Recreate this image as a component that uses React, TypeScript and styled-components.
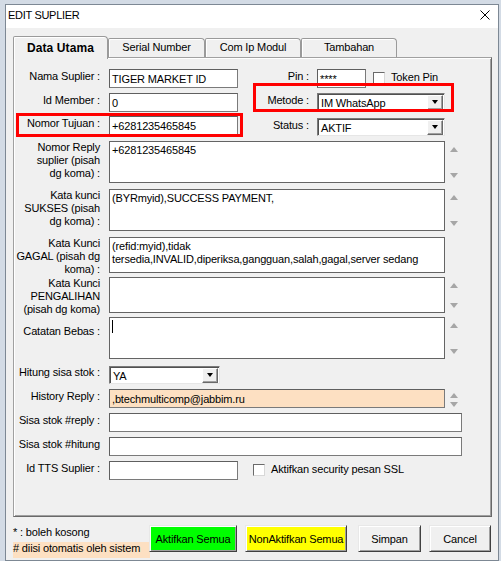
import React from "react";
import styled, { createGlobalStyle } from "styled-components";

const GlobalStyle = createGlobalStyle`
  html, body {
    margin: 0;
    padding: 0;
  }
  body {
    width: 501px;
    height: 561px;
    overflow: hidden;
    background: #d3dbe5;
    font-family: "Liberation Sans", Arial, sans-serif;
    font-size: 11px;
    letter-spacing: -0.15px;
    color: #000;
  }
  * {
    box-sizing: border-box;
  }
`;

const Window = styled.div`
  margin: 4px 0 0 5px;
  width: 494px;
  height: 557px;
  border: 1px solid #7d8894;
  background: #f0f0f0;
  display: flex;
  flex-direction: column;
`;

const TitleBar = styled.div`
  flex-shrink: 0;
  height: 23px;
  background: #fff;
  display: flex;
  align-items: center;
  justify-content: space-between;
  padding: 0 8px 3px 2px;
`;

const Title = styled.span`
  font-size: 11px;
  letter-spacing: -0.3px;
`;

const Body = styled.div`
  padding: 8px 0 0 7px;
`;

// tabs
const TabBar = styled.div`
  display: flex;
  align-items: flex-end;
  height: 21px;
  position: relative;
  z-index: 1;
`;

const Tab = styled.div<{ $w: number; $active?: boolean }>`
  width: ${({ $w }) => $w}px;
  height: ${({ $active }) => ($active ? 23 : 19)}px;
  margin-bottom: ${({ $active }) => ($active ? -2 : 0)}px;
  background: #f0f0f0;
  border: 1px solid #9a9a9a;
  border-bottom: none;
  border-radius: 2px 4px 0 0;
  box-shadow: inset 1px 1px #fff;
  display: flex;
  justify-content: center;
  padding-top: ${({ $active }) => ($active ? 4 : 2)}px;
  font-size: ${({ $active }) => ($active ? 12 : 11)}px;
  font-weight: ${({ $active }) => ($active ? 700 : 400)};
  letter-spacing: ${({ $active }) => ($active ? "0.1px" : "-0.15px")};
`;

const Panel = styled.div`
  position: relative;
  width: 479px;
  height: 460px;
  border: 1px solid;
  border-color: #a0a0a0 #696969 #696969 #a0a0a0;
  box-shadow: inset 1px 1px #fff, inset -1px -1px #a0a0a0;
  padding-top: 11px;
`;

// form rows
const Row = styled.div<{ $mt: number; $h: number }>`
  display: flex;
  align-items: flex-start;
  margin-top: ${({ $mt }) => $mt}px;
  height: ${({ $h }) => $h}px;
`;

const LabelBox = styled.div<{ $w: number; $pt: number; $mr: number }>`
  width: ${({ $w }) => $w}px;
  flex-shrink: 0;
  margin-right: ${({ $mr }) => $mr}px;
  padding-top: ${({ $pt }) => $pt}px;
  display: flex;
  justify-content: flex-end;
  line-height: 13px;
  white-space: nowrap;
`;

const LabelText = styled.span`
  text-align: right;
`;

const FieldLabel = ({
  children,
  pt = 1,
  w = 86,
  mr = 9,
}: {
  children: React.ReactNode;
  pt?: number;
  w?: number;
  mr?: number;
}) => (
  <LabelBox $w={w} $pt={pt} $mr={mr}>
    <LabelText>{children}</LabelText>
  </LabelBox>
);

const TextBox = styled.div<{ $w: number; $h?: number; $bg?: string }>`
  width: ${({ $w }) => $w}px;
  height: ${({ $h }) => $h ?? 19}px;
  flex-shrink: 0;
  background: ${({ $bg }) => $bg ?? "#fff"};
  border: 1px solid;
  border-color: #5f5f5f #7a7a7a #7a7a7a #5f5f5f;
  padding: 0 2px;
  display: flex;
  align-items: center;
  white-space: nowrap;
  overflow: hidden;
`;

const MemoBox = styled.div<{ $h: number }>`
  width: 336px;
  height: ${({ $h }) => $h}px;
  flex-shrink: 0;
  background: #fff;
  border: 1px solid #646464;
  padding: 2px 2px 0;
  line-height: 13px;
  white-space: nowrap;
  overflow: hidden;
`;

const ScrollCol = styled.div<{ $pt: number; $pb: number }>`
  width: 18px;
  align-self: stretch;
  display: flex;
  flex-direction: column;
  justify-content: space-between;
  align-items: center;
  padding: ${({ $pt, $pb }) => `${$pt}px 0 ${$pb}px`};
`;

const Arrow = styled.span<{ $dir: "up" | "down" }>`
  width: 0;
  height: 0;
  border-left: 4px solid transparent;
  border-right: 4px solid transparent;
  ${({ $dir }) =>
    $dir === "up" ? "border-bottom: 5px solid #a6a6a6;" : "border-top: 5px solid #a6a6a6;"}
`;

const Scroller = ({ pt = 6, pb = 5 }: { pt?: number; pb?: number }) => (
  <ScrollCol $pt={pt} $pb={pb}>
    <Arrow $dir="up" />
    <Arrow $dir="down" />
  </ScrollCol>
);

const Caret = styled.span`
  display: inline-block;
  width: 1px;
  height: 13px;
  background: #000;
  vertical-align: top;
`;

const Combo = styled.div<{ $w: number; $mt?: number }>`
  width: ${({ $w }) => $w}px;
  height: 18px;
  margin-top: ${({ $mt }) => $mt ?? 0}px;
  flex-shrink: 0;
  background: #fff;
  border: 1px solid;
  border-color: #7a7a7a #e6e6e6 #e6e6e6 #7a7a7a;
  box-shadow: inset 1px 1px #505050;
  display: flex;
  align-items: center;
  justify-content: space-between;
  padding: 1px 0 0 3px;
`;

const DropButton = styled.div`
  width: 16px;
  height: 15px;
  margin: 0 1px 1px 0;
  background: #f0f0f0;
  border: 1px solid;
  border-color: #fff #696969 #696969 #fff;
  box-shadow: inset -1px -1px #a0a0a0;
  display: flex;
  align-items: center;
  justify-content: center;

  &::after {
    content: "";
    border-left: 3.5px solid transparent;
    border-right: 3.5px solid transparent;
    border-top: 4px solid #000;
  }
`;

const CheckBox = styled.span<{ $ml: number }>`
  width: 12px;
  height: 12px;
  margin: 3px 0 0 ${({ $ml }) => $ml}px;
  flex-shrink: 0;
  background: #fff;
  border: 1px solid;
  border-color: #6a6a6a #d8d8d8 #d8d8d8 #6a6a6a;
`;

const CheckText = styled.span`
  margin-left: 6px;
  line-height: 13px;
  padding-top: 2px;
`;

const Annotation = styled.div<{ $l: number; $t: number; $w: number; $h: number }>`
  position: absolute;
  left: ${({ $l }) => $l}px;
  top: ${({ $t }) => $t}px;
  width: ${({ $w }) => $w}px;
  height: ${({ $h }) => $h}px;
  border: 3px solid #f00;
  pointer-events: none;
`;

// footer
const Footer = styled.div`
  display: flex;
  align-items: flex-start;
  margin-top: 8px;
`;

const Notes = styled.div`
  width: 136px;
  flex-shrink: 0;
`;

const NoteLine = styled.div`
  line-height: 14px;
`;

const NoteHighlight = styled.div`
  width: 137px;
  height: 16px;
  margin-top: 3px;
  line-height: 13px;
  background: #fde0c2;
`;

const Button = styled.button<{ $w: number; $ml: number; $bg?: string }>`
  width: ${({ $w }) => $w}px;
  height: 27px;
  margin-left: ${({ $ml }) => $ml}px;
  padding: 0;
  background: ${({ $bg }) => $bg ?? "#f0f0f0"};
  border: 1px solid;
  border-color: #e8e8e8 #404040 #404040 #e8e8e8;
  box-shadow: inset 1px 1px #fff, inset -1px -1px #a0a0a0;
  font-family: inherit;
  font-size: 11px;
  letter-spacing: -0.15px;
  color: #000;
`;

const CloseIcon = () => (
  <svg width="10" height="10" viewBox="0 0 10 10">
    <path d="M0.5 0.5 L9.5 9.5 M9.5 0.5 L0.5 9.5" stroke="#000" strokeWidth="1" fill="none" />
  </svg>
);

const App = () => {
  return (
    <>
      <GlobalStyle />
      <Window>
        <TitleBar>
          <Title>EDIT SUPLIER</Title>
          <CloseIcon />
        </TitleBar>
        <Body>
          <TabBar>
            <Tab $w={95} $active>
              Data Utama
            </Tab>
            <Tab $w={97}>Serial Number</Tab>
            <Tab $w={96}>Com Ip Modul</Tab>
            <Tab $w={96}>Tambahan</Tab>
          </TabBar>
          <Panel>
            <Row $mt={0} $h={19}>
              <FieldLabel>Nama Suplier :</FieldLabel>
              <TextBox $w={129}>TIGER MARKET ID</TextBox>
              <FieldLabel w={71} mr={8}>
                Pin :
              </FieldLabel>
              <TextBox $w={49}>****</TextBox>
              <CheckBox $ml={7} />
              <CheckText>Token Pin</CheckText>
            </Row>
            <Row $mt={5} $h={19}>
              <FieldLabel>Id Member :</FieldLabel>
              <TextBox $w={129}>0</TextBox>
              <FieldLabel w={71} mr={8}>
                Metode :
              </FieldLabel>
              <Combo $w={128} $mt={0}>
                IM WhatsApp
                <DropButton />
              </Combo>
            </Row>
            <Row $mt={4} $h={19}>
              <FieldLabel>Nomor Tujuan :</FieldLabel>
              <TextBox $w={129}>+6281235465845</TextBox>
              <FieldLabel w={71} mr={8} pt={3}>
                Status :
              </FieldLabel>
              <Combo $w={128} $mt={2}>
                AKTIF
                <DropButton />
              </Combo>
            </Row>
            <Row $mt={6} $h={42}>
              <FieldLabel pt={0}>
                Nomor Reply
                <br />
                suplier (pisah
                <br />
                dg koma) :
              </FieldLabel>
              <MemoBox $h={42}>+6281235465845</MemoBox>
              <Scroller />
            </Row>
            <Row $mt={6} $h={42}>
              <FieldLabel pt={0}>
                Kata kunci
                <br />
                SUKSES (pisah
                <br />
                dg koma) :
              </FieldLabel>
              <MemoBox $h={42}>(BYRmyid),SUCCESS PAYMENT,</MemoBox>
              <Scroller />
            </Row>
            <Row $mt={6} $h={36}>
              <FieldLabel pt={0}>
                Kata Kunci
                <br />
                GAGAL (pisah dg
                <br />
                koma) :
              </FieldLabel>
              <MemoBox $h={36}>
                (refid:myid),tidak
                <br />
                tersedia,INVALID,diperiksa,gangguan,salah,gagal,server sedang
              </MemoBox>
            </Row>
            <Row $mt={4} $h={36}>
              <FieldLabel pt={0}>
                Kata Kunci
                <br />
                PENGALIHAN
                <br />
                (pisah dg koma)
              </FieldLabel>
              <MemoBox $h={36} />
              <Scroller />
            </Row>
            <Row $mt={4} $h={42}>
              <FieldLabel pt={8}>Catatan Bebas :</FieldLabel>
              <MemoBox $h={42}>
                <Caret />
              </MemoBox>
              <Scroller />
            </Row>
            <Row $mt={7} $h={18}>
              <FieldLabel pt={0}>Hitung sisa stok :</FieldLabel>
              <Combo $w={111}>
                YA
                <DropButton />
              </Combo>
            </Row>
            <Row $mt={5} $h={19}>
              <FieldLabel>History Reply :</FieldLabel>
              <TextBox $w={336} $bg="#fde0c2">
                ,btechmulticomp@jabbim.ru
              </TextBox>
              <Scroller pt={4} pb={1} />
            </Row>
            <Row $mt={5} $h={19}>
              <FieldLabel>Sisa stok #reply :</FieldLabel>
              <TextBox $w={353} />
            </Row>
            <Row $mt={5} $h={19}>
              <FieldLabel>Sisa stok #hitung</FieldLabel>
              <TextBox $w={353} />
            </Row>
            <Row $mt={5} $h={19}>
              <FieldLabel>Id TTS Suplier :</FieldLabel>
              <TextBox $w={129} />
              <CheckBox $ml={15} />
              <CheckText>Aktifkan security pesan SSL</CheckText>
            </Row>

            <Annotation $l={2} $t={55} $w={227} $h={24} />
            <Annotation $l={239} $t={25} $w={201} $h={29} />
          </Panel>
          <Footer>
            <Notes>
              <NoteLine>* : boleh kosong</NoteLine>
              <NoteHighlight># diisi otomatis oleh sistem</NoteHighlight>
            </Notes>
            <Button $w={88} $ml={0} $bg="#00ff00">
              Aktifkan Semua
            </Button>
            <Button $w={102} $ml={8} $bg="#ffff00">
              NonAktifkan Semua
            </Button>
            <Button $w={63} $ml={11}>
              Simpan
            </Button>
            <Button $w={62} $ml={8}>
              Cancel
            </Button>
          </Footer>
        </Body>
      </Window>
    </>
  );
};

export default App;
